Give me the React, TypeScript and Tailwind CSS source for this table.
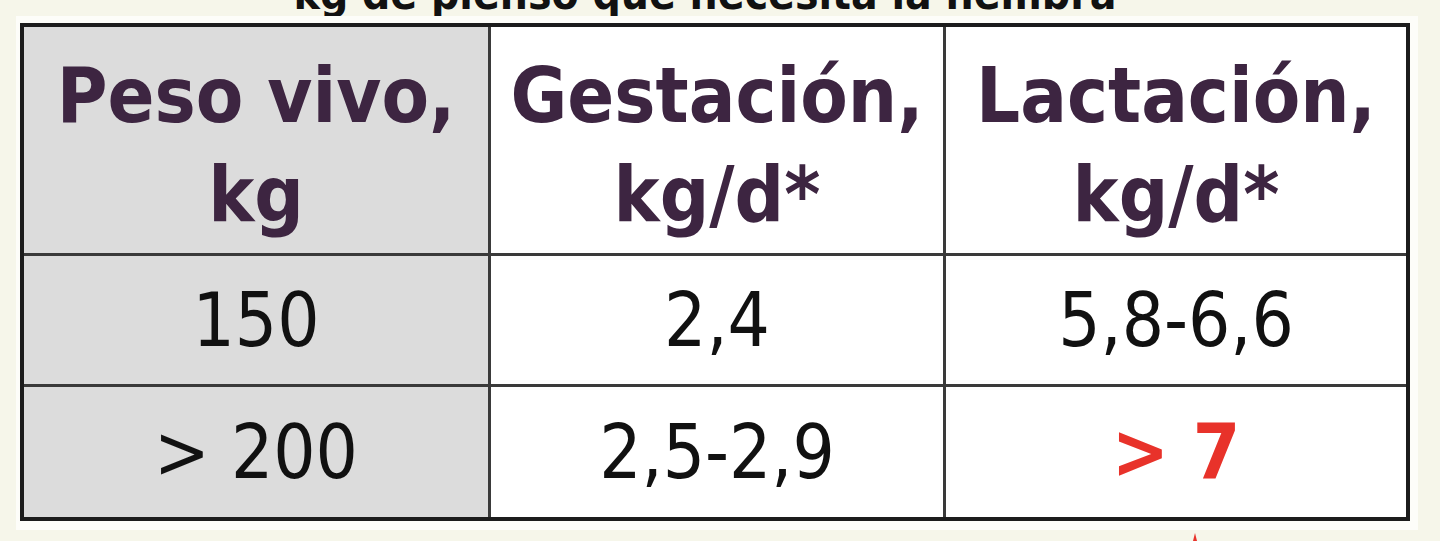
import React from "react";

const font = { fontFamily: '"DejaVu Sans Condensed", "DejaVu Sans", sans-serif' };

function Head({ a, b }: { a: string; b: string }) {
  return (
    <div className="flex flex-col items-center justify-center text-[77px] font-bold leading-[99px] text-[#3d2541] pt-[10px]">
      <span>{a}</span>
      <span>{b}</span>
    </div>
  );
}

function Cell({ children, gray, red }: { children: React.ReactNode; gray?: boolean; red?: boolean }) {
  return (
    <div
      className={
        "flex items-center justify-center " +
        (gray ? "bg-[#dcdcdc] " : "bg-white ") +
        (red ? "text-[#e8322a] font-bold text-[76px]" : "text-[#111111] text-[74px]")
      }
    >
      {children}
    </div>
  );
}

export default function App() {
  return (
    <div className="w-[1440px] h-[541px] bg-[#f6f6ea] overflow-hidden relative" style={font}>
      <div className="h-[16px] overflow-hidden flex justify-center pr-[30px]">
        <div className="-mt-[28px] text-[44px] leading-[44px] font-bold text-[#111111] whitespace-nowrap">
          kg de pienso que necesita la hembra
        </div>
      </div>
      <div className="ml-[16px] w-[1402px] h-[514px] bg-[#fdfdf9] pl-[4px] pt-[7px]">
        <div className="w-[1390px] h-[498px] border-[4px] border-[#1c1c1c] bg-[#3a3a3a] grid grid-cols-[464px_452px_460px] grid-rows-[226px_128px_130px] gap-[3px]">
          <div className="bg-[#dcdcdc] flex items-center justify-center">
            <Head a="Peso vivo," b="kg" />
          </div>
          <div className="bg-white flex items-center justify-center">
            <Head a="Gestación," b="kg/d*" />
          </div>
          <div className="bg-white flex items-center justify-center">
            <Head a="Lactación," b="kg/d*" />
          </div>
          <Cell gray>150</Cell>
          <Cell>2,4</Cell>
          <Cell>5,8-6,6</Cell>
          <Cell gray>&gt; 200</Cell>
          <Cell>2,5-2,9</Cell>
          <Cell red>&gt; 7</Cell>
        </div>
      </div>
      <svg className="absolute left-[1190px] top-[533px]" width="10" height="8" viewBox="0 0 10 8">
        <path d="M5 0 L7 8 L3 8 Z" fill="#e8322a" />
      </svg>
    </div>
  );
}
